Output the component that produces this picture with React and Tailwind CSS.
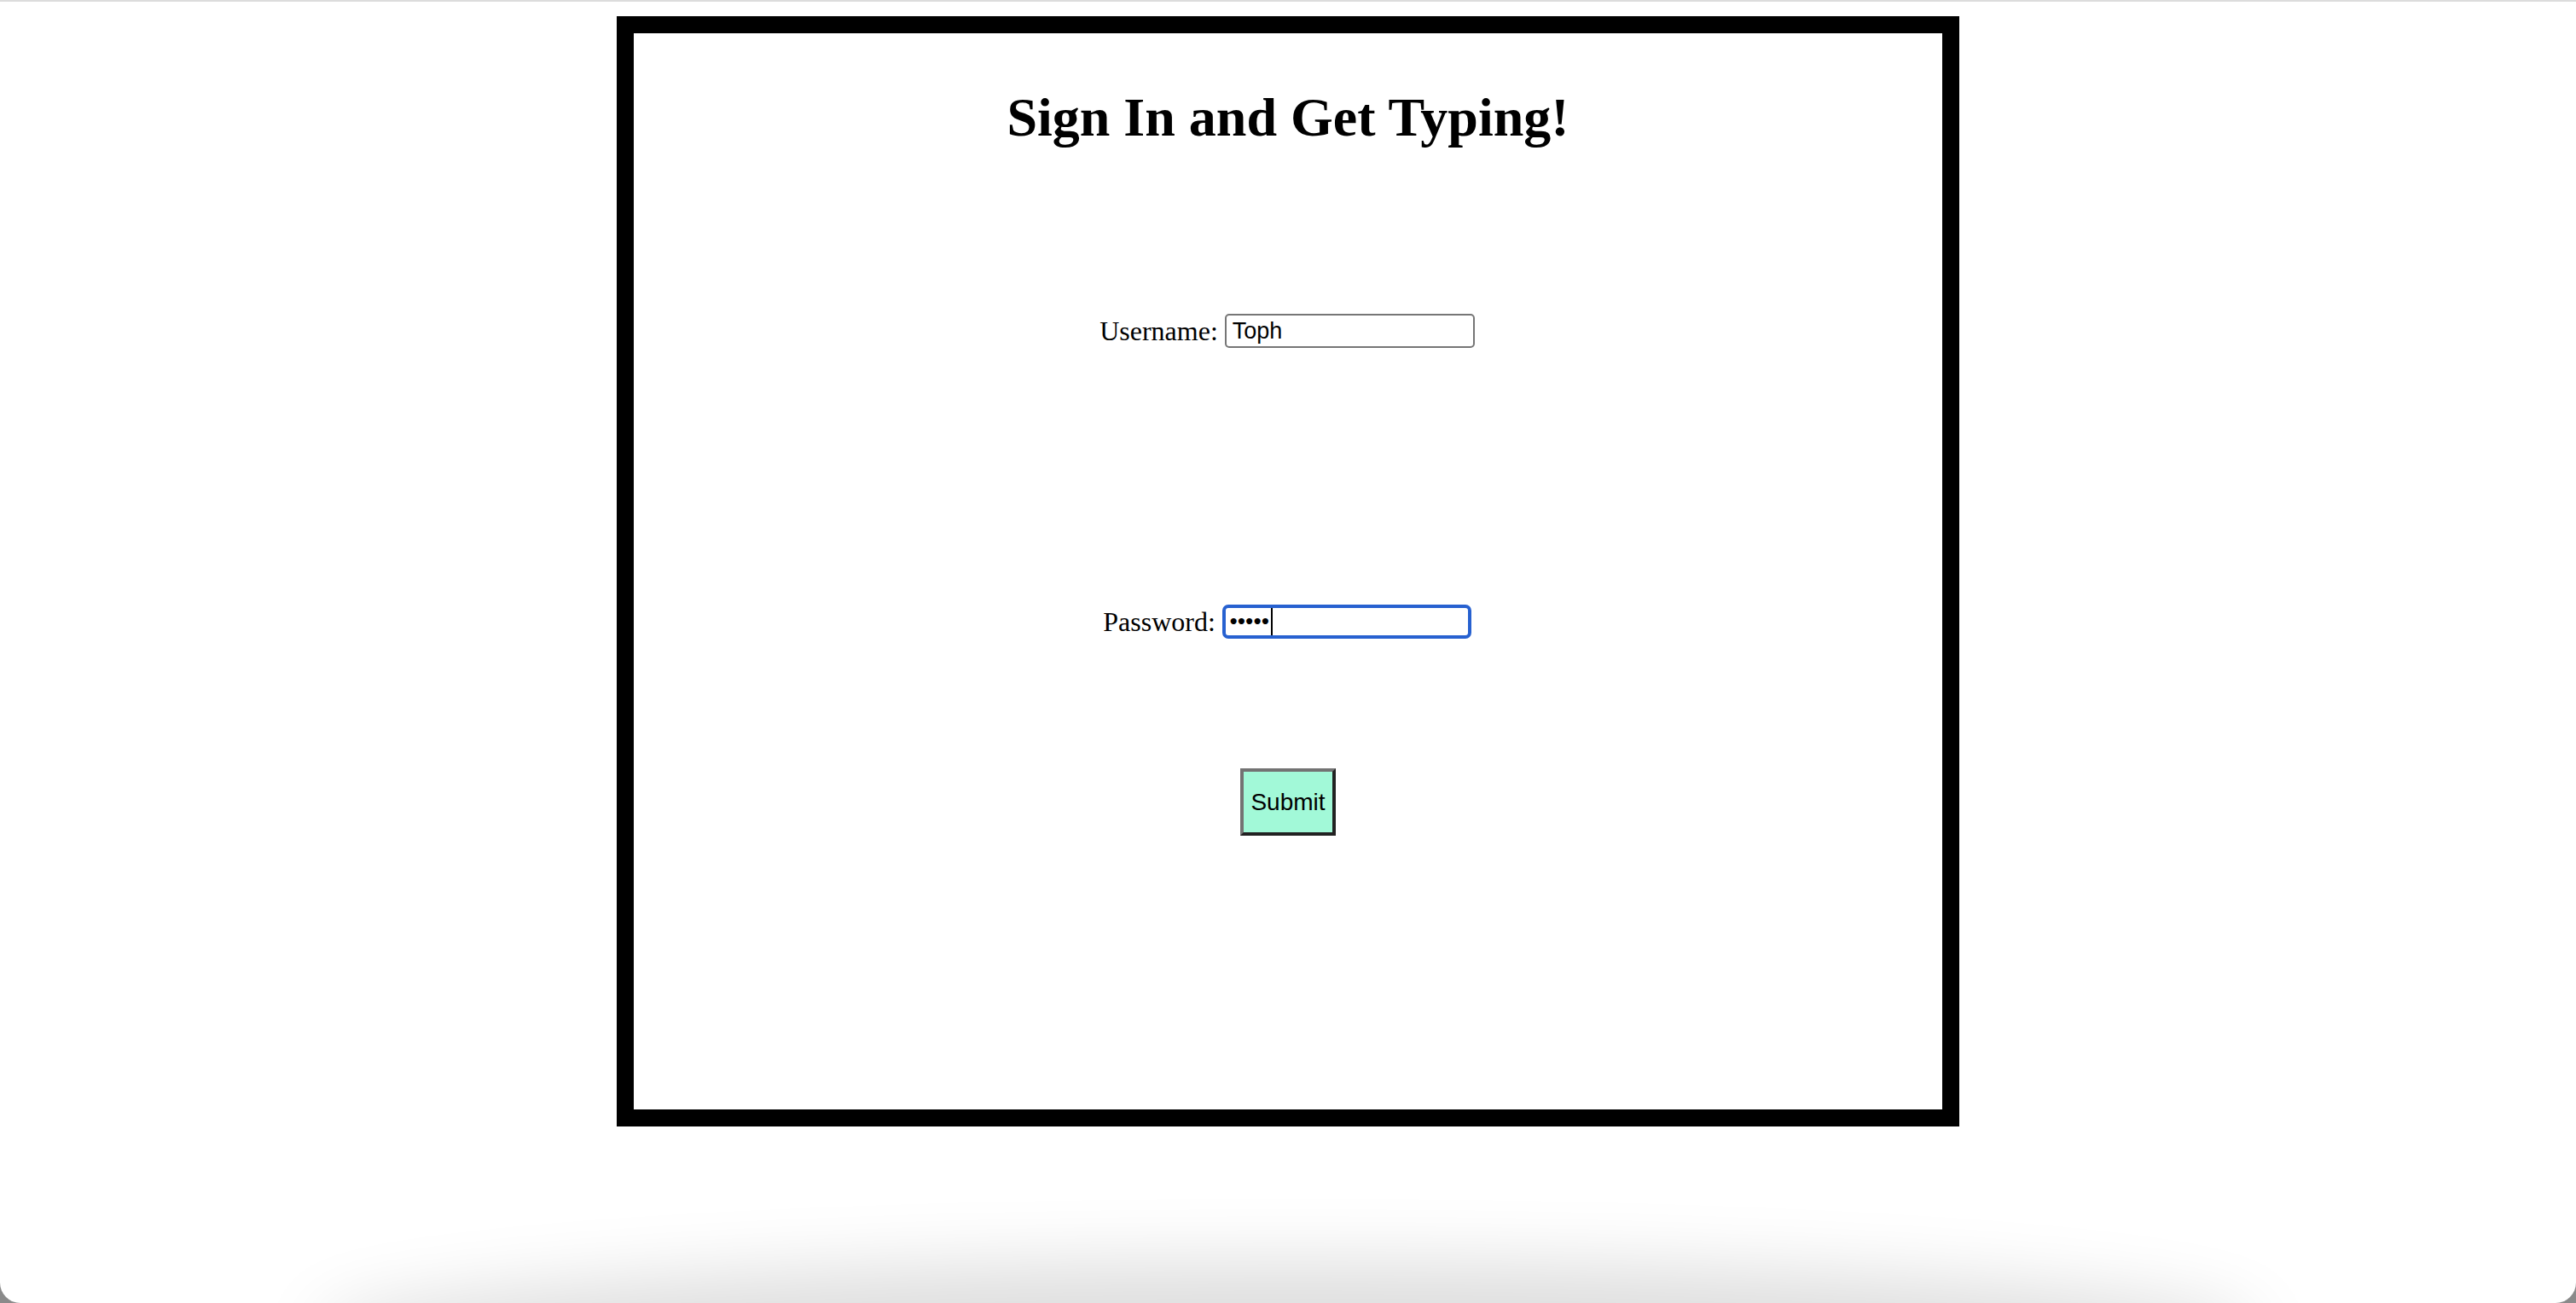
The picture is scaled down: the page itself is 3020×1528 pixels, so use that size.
export default function App() {
  return (
    <div className="w-[3020px] h-[1528px] bg-[#8a8a8a]">
      <div className="relative w-full h-full bg-white rounded-b-[24px] overflow-hidden">
        <div className="h-[2px] bg-[#dcdcdc]" />
        <div className="mx-auto mt-[17px] w-[1574px] h-[1302px] border-[20px] border-black flex flex-col items-center font-['Liberation_Serif','Times_New_Roman',serif] text-black">
          <h1 className="mt-[62px] text-[64px] leading-[74px] font-bold">Sign In and Get Typing!</h1>
          <div className="mt-[193px] flex items-center h-[40px] mr-[2px]">
            <span className="text-[32px] leading-[40px] mr-[8px]">Username:</span>
            <div className="w-[293px] h-[40px] border-2 border-[#767676] rounded-[5px] flex items-center pl-[7px] font-['Liberation_Sans',Arial,sans-serif] text-[27px]">
              Toph
            </div>
          </div>
          <div className="mt-[301px] flex items-center h-[40px] mr-[2px]">
            <span className="text-[32px] leading-[40px] mr-[8px]">Password:</span>
            <div className="w-[292px] h-[40px] border-[4px] border-[#2761d0] rounded-[7px] flex items-center pl-[3px] font-['DejaVu_Sans',sans-serif] text-[20px]">
              <span className="tracking-[-3.5px] font-bold">•••••</span>
              <span className="inline-block w-[2px] h-[32px] bg-black ml-[4px]" />
            </div>
          </div>
          <div className="mt-[152px] w-[112px] h-[79px] bg-[#a2f9d8] border-[4px] border-t-[#737373] border-l-[#737373] border-r-[#222222] border-b-[#222222] flex items-center justify-center font-['Liberation_Sans',Arial,sans-serif] text-[28px]">
            Submit
          </div>
        </div>
        <div className="absolute left-[420px] right-[420px] bottom-[-70px] h-[70px] rounded-[50%] shadow-[0_0_80px_50px_rgba(0,0,0,0.13)] bg-[#d8d8d8]" />
      </div>
    </div>
  );
}
